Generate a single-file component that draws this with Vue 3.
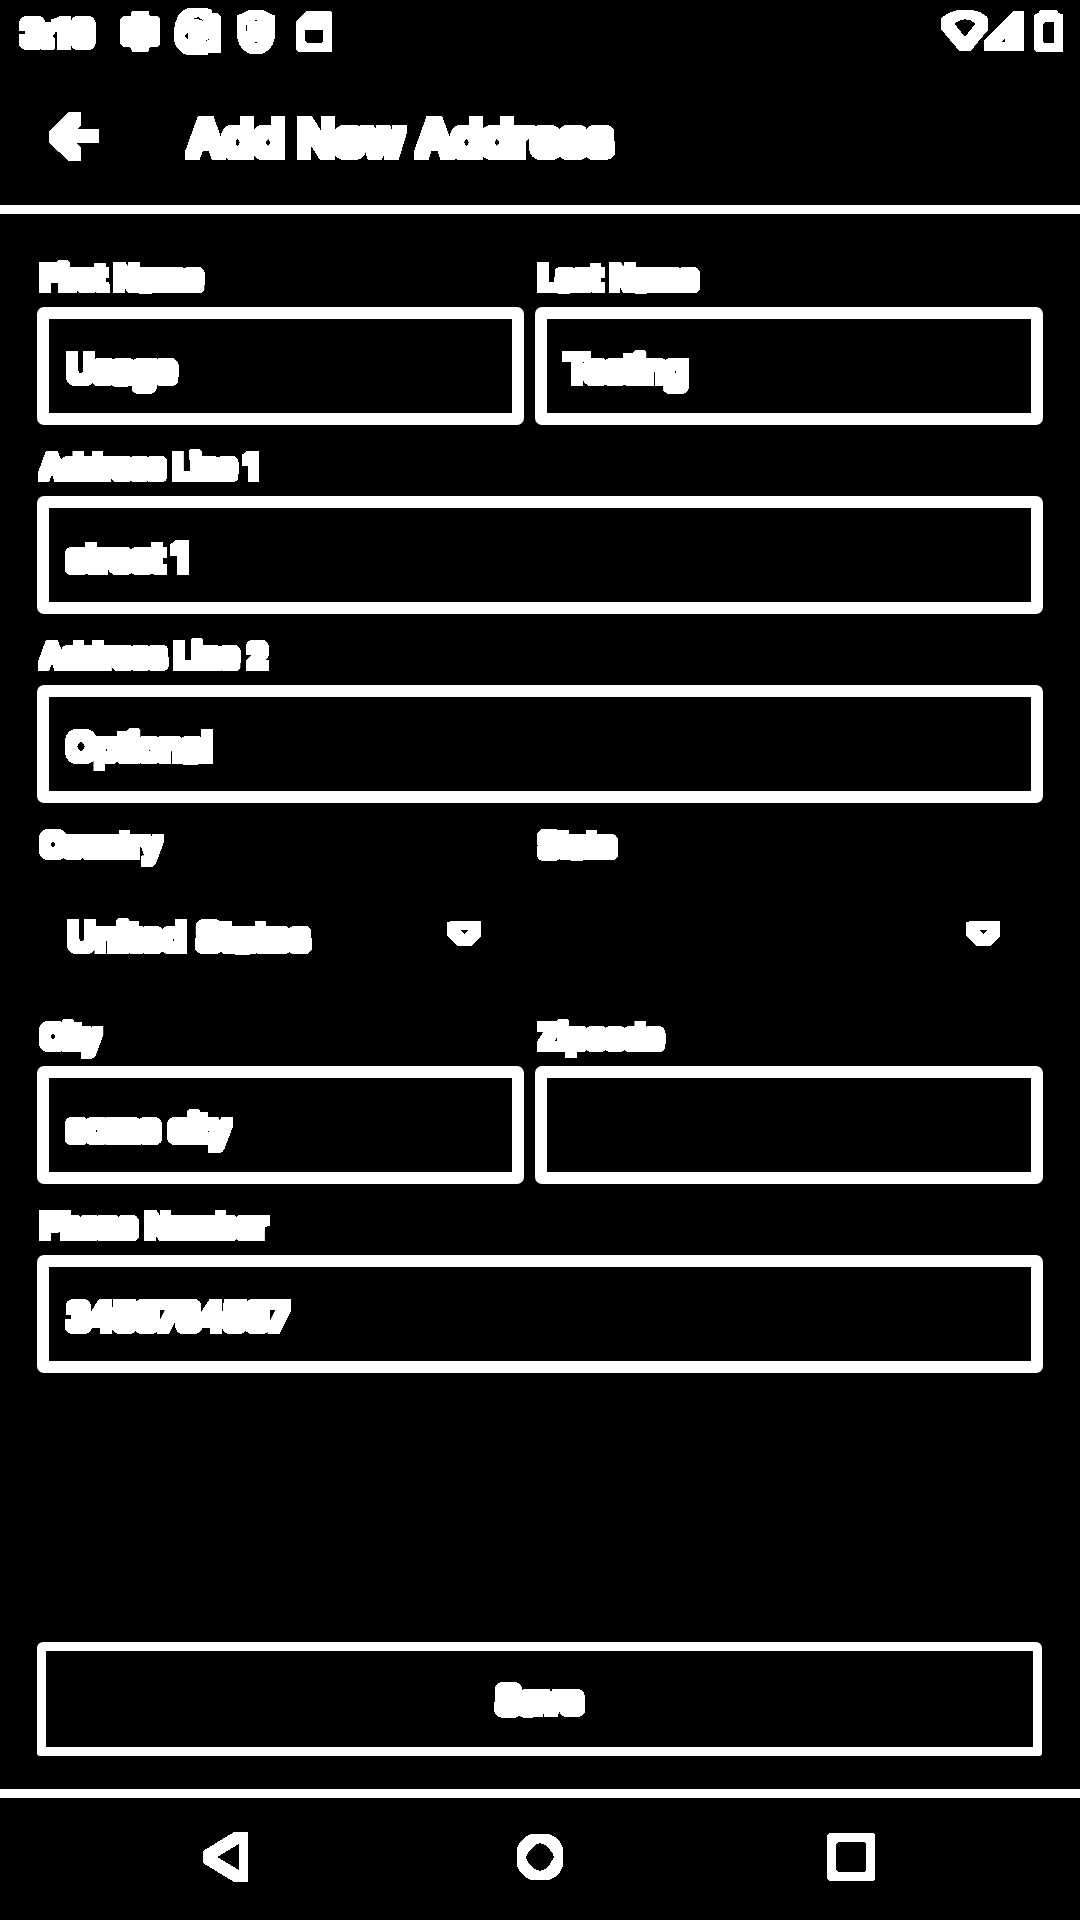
<script setup>
const rows = [
  [
    { label: 'First Name', value: 'Usage', track: -0.48 },
    { label: 'Last Name', value: 'Testing', track: -0.78 },
  ],
  [{ label: 'Address Line 1', labelTrack: 0.05, value: 'street 1', track: -0.55 }],
  [{ label: 'Address Line 2', labelTrack: 0.25, value: 'Optional', track: -0.05 }],
  [
    { label: 'Country', labelTrack: 0, value: 'United States', track: 0.72, select: true },
    { label: 'State', value: '', select: true },
  ],
  [
    { label: 'City', labelTrack: 0, value: 'some city', track: -0.7 },
    { label: 'Zipcode', labelTrack: 0.45, value: '' },
  ],
  [{ label: 'Phone Number', labelTrack: 0.26, value: '3456784567', track: -0.27 }],
]
const spacing = (n) => ({ letterSpacing: `${n || 0}px` })
</script>

<template>
  <div class="screen">
    <svg class="defs" width="0" height="0">
      <filter id="heavy" x="-30%" y="-50%" width="160%" height="200%">
        <feComponentTransfer>
          <feFuncA type="linear" slope="20" intercept="-4" />
        </feComponentTransfer>
        <feMorphology operator="dilate" radius="4" />
      </filter>
    </svg>

    <header class="top">
      <div class="status">
        <span class="clock heavy">3:10</span>
        <svg class="left-icons" width="216" height="50" viewBox="351 15 648 150" shape-rendering="crispEdges">
          <path d="M393 36L396 33H444L447 36V45L450 48H471L480 57V132L471 141H450L447 144V150L444 156H396L393 144L387 141H369L360 132V57L369 48H390L393 45Z" />
          <path fill-rule="evenodd" d="M564 24H618L636 30V38H650L663 51V159H624V165H561L546 159L531 144L522 123V96L525 69L537 42L546 33ZM582 56L594 51L609 60V63L597 58ZM555 108L564 98V120ZM617 121H620V124H617ZM624 118H627V121H624Z" />
          <path fill-rule="evenodd" d="M747 30H788L825 47V111L819 132L807 150L786 162H750L729 150L717 132L711 111V47ZM738 75H741V93H738ZM765 60H771V63H765ZM765 126H771V129H765Z" />
          <path fill-rule="evenodd" d="M918 33H990L996 39V153L993 156H894L888 147V66ZM915 90H969V123L963 129H921L915 120Z" />
        </svg>
        <svg class="right-icons" width="123" height="43" viewBox="122 29 369 129" shape-rendering="crispEdges">
          <path fill-rule="evenodd" d="M123 55L130 47L150 36L168 30H220L240 36L258 47L264 55V88L210 153H178L123 88ZM162 70L180 60L195 57L210 60L225 70L194 110Z" />
          <path fill-rule="evenodd" d="M340 33H372V153H252V120ZM303 125L315 113V125Z" />
          <path fill-rule="evenodd" d="M417 33L420 30H471L475 38L486 41L489 45V153L486 156H408L402 150V43L415 38ZM429 70L436 64H458L462 67V124L458 129H434L429 124Z" />
        </svg>
      </div>
      <div class="toolbar">
        <svg class="back" width="50" height="49" viewBox="147 336 150 147" shape-rendering="crispEdges">
          <path d="M206 336H240L243 339V375L231 387H294L297 390V429H228L243 444V483H206L147 428V393Z" />
        </svg>
        <span class="title heavy">Add New Address</span>
      </div>
    </header>

    <main class="form">
      <div v-for="(row, i) in rows" :key="i" class="row" :class="{ two: row.length > 1 }">
        <div v-for="f in row" :key="f.label" class="field">
          <div class="label"><span class="heavy" :style="spacing(f.labelTrack)">{{ f.label }}</span></div>
          <div :class="f.select ? 'select' : 'box'">
            <span v-if="f.value" class="value heavy" :style="spacing(f.track)">{{ f.value }}</span>
            <svg v-if="f.select" class="caret" width="34" height="25" viewBox="0 0 34 25" shape-rendering="crispEdges">
              <path fill-rule="evenodd" d="M0 1L5 0H33L34 1V15L24 25H10L0 15ZM13 9H21L17 13Z" />
            </svg>
          </div>
        </div>
      </div>
    </main>

    <div class="action">
      <div class="save"><span class="heavy">Save</span></div>
    </div>

    <nav class="nav">
      <svg width="46" height="50" viewBox="0 0 46 50" shape-rendering="crispEdges">
        <path fill-rule="evenodd" d="M31 0H44L45 1V50H31L0 31V19ZM14 25L36 12V38Z" />
      </svg>
      <svg class="home" width="46" height="46" viewBox="0 0 46 46" shape-rendering="crispEdges">
        <path fill-rule="evenodd" d="M14 0H32L38 3L43 8L46 14V32L43 38L38 43L32 46H14L8 43L3 38L0 32V14L3 8L8 3ZM23 9L18 11L13 16L10 21L9 23L10 26L13 31L18 35L23 37L28 35L33 30L36 25L37 23L36 20L33 16L28 11Z" />
      </svg>
      <svg width="48" height="48" viewBox="0 0 48 48" shape-rendering="crispEdges">
        <path fill-rule="evenodd" d="M2 0H46L48 2V46L46 48H2L0 46V2ZM11 9L9 11V37L11 39H37L39 37V11L37 9Z" />
      </svg>
    </nav>
  </div>
</template>

<style>
body {
  margin: 0;
  background: #000;
}
</style>

<style scoped>
.screen {
  width: 1080px;
  height: 1920px;
  display: flex;
  flex-direction: column;
  background: #000;
  color: #fff;
  fill: #fff;
  font-family: Inter, sans-serif;
  overflow: hidden;
}
.defs {
  position: absolute;
}
.heavy {
  display: inline-block;
  white-space: nowrap;
  filter: url(#heavy);
}
svg {
  display: block;
  flex: none;
}
.top {
  box-sizing: border-box;
  height: 214px;
  border-bottom: 9px solid #fff;
}
.status {
  height: 63px;
  display: flex;
  align-items: flex-start;
}
.clock {
  width: 95px;
  box-sizing: border-box;
  padding-left: 22px;
  margin-top: 12px;
  font-family: Roboto, sans-serif;
  font-size: 36.75px;
  font-weight: 700;
  letter-spacing: -0.7px;
  line-height: 44px;
}
.left-icons {
  margin: 5px 0 0 22px;
}
.right-icons {
  margin: 10px 16px 0 auto;
}
.toolbar {
  height: 142px;
  display: flex;
  align-items: flex-start;
  padding-left: 49px;
}
.back {
  margin-top: 49px;
}
.title {
  margin: 45px 0 0 89px;
  font-size: 50px;
  font-weight: 500;
  letter-spacing: -0.33px;
  line-height: 60px;
}
.form {
  padding: 46px 37px 0;
  flex: 1;
}
.row {
  display: grid;
  grid-template-columns: 1fr;
  margin-bottom: 24px;
}
.row.two {
  grid-template-columns: 487px 508px;
  column-gap: 11px;
}
.label {
  height: 36px;
  line-height: 36px;
  margin-bottom: 11px;
  padding-left: 4px;
  font-size: 31.5px;
}
.box,
.select {
  box-sizing: border-box;
  display: flex;
  align-items: center;
  font-size: 36.75px;
  line-height: 44px;
}
.box {
  height: 118px;
  border: 12px solid #fff;
  border-radius: 7px;
  padding: 6px 0 0 18px;
}
.select {
  height: 121px;
  padding: 5px 43px 0 31px;
}
.caret {
  margin: -7px 0 0 auto;
}
.action {
  height: 147px;
  padding: 0 38px 0 37px;
}
.save {
  box-sizing: border-box;
  height: 114px;
  border: 9px solid #fff;
  border-radius: 6px 6px 3px 3px;
  display: flex;
  align-items: center;
  justify-content: center;
  padding-top: 1px;
  font-size: 36.75px;
  font-weight: 500;
  line-height: 44px;
}
.nav {
  box-sizing: border-box;
  height: 131px;
  border-top: 9px solid #fff;
  padding: 0 205px 4px 203px;
  display: flex;
  align-items: center;
  justify-content: space-between;
}
.home {
  margin-left: 4px;
}
</style>
